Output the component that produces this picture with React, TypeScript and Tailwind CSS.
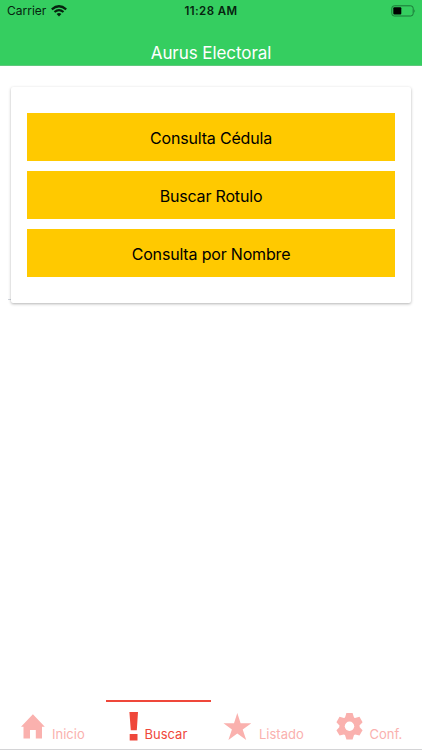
import type { ReactNode } from "react";

const actions = ["Consulta Cédula", "Buscar Rotulo", "Consulta por Nombre"];

const App = () => {
  return (
    <div className="flex h-[750px] w-[422px] flex-col overflow-hidden bg-white font-['Inter',sans-serif]">
      <Header />
      <main className="flex-1 pt-[21px] pr-[11px] pl-2">
        <div className="flex items-end">
          <span className="mb-[3px] h-px w-[3px] flex-none bg-gray-300"></span>
          <section className="flex h-[216px] w-[400px] flex-none flex-col gap-2.5 rounded-[2px] bg-white px-4 pt-[26px] shadow-[0_1px_3px_rgba(0,0,0,0.3)]">
            {actions.map((label) => (
              <button
                key={label}
                className="h-12 w-full bg-[#ffc900] pt-px text-base tracking-[-0.18px] text-black"
              >
                {label}
              </button>
            ))}
          </section>
        </div>
      </main>
      <TabBar />
    </div>
  );
};

const Header = () => {
  return (
    <header className="h-[66px] flex-none border-b border-[#5fc87d] bg-[#35ce60]">
      <div className="grid h-[22px] grid-cols-3 items-center text-[12px] text-[#06240f]">
        <div className="flex items-center gap-[5px] pl-[7px]">
          <span>Carrier</span>
          <WifiIcon />
        </div>
        <span className="pt-px text-center text-[11.5px] font-semibold tracking-[0.4px]">
          11:28 AM
        </span>
        <div className="flex justify-end pr-1.5">
          <BatteryIcon />
        </div>
      </div>
      <h1 className="pt-[19px] text-center text-[17px] leading-6 tracking-[-0.07px] text-white">
        Aurus Electoral
      </h1>
    </header>
  );
};

const TabBar = () => {
  return (
    <nav className="grid h-[50px] flex-none grid-cols-4 border-b border-[#d4d4d6] text-[13px]">
      <Tab label="Inicio" offset="gap-1.5 pl-5">
        <svg width="26" height="30" viewBox="0 0 26 30" fill="currentColor">
          <path d="M1 14.8 12.9 2.2 24.8 14.8H22V26.6H15.8V18H10V26.6H3.5V14.8Z" />
        </svg>
      </Tab>
      <Tab label="Buscar" offset="gap-1.5 pl-[23px]" active>
        <svg width="10" height="30" viewBox="0 0 10 30" fill="currentColor">
          <path d="M.4 0H9L7.8 18.3H1.8ZM.7 22H8.5V28.5H.7Z" />
        </svg>
      </Tab>
      <Tab label="Listado" offset="gap-2 pl-3">
        <svg width="28" height="30" viewBox="0 0 28 30" fill="currentColor">
          <path d="M14.3 1 17.6 11.3H28.2L19.7 17.5 23.2 28 14.3 21.6 5.4 28 8.9 17.5.5 11.3H11Z" />
        </svg>
      </Tab>
      <Tab label="Conf." offset="gap-[7px] pl-[18px]">
        <GearIcon />
      </Tab>
    </nav>
  );
};

type TabProps = {
  label: string;
  offset: string;
  active?: boolean;
  children: ReactNode;
};

const Tab = ({ label, offset, active = false, children }: TabProps) => {
  return (
    <button
      className={`flex items-start border-t-2 pt-2.5 whitespace-nowrap ${offset} ${
        active
          ? "border-[#ef473a] text-[#ef473a]"
          : "border-transparent text-[#fab1ae]"
      }`}
    >
      <span className="flex-none">{children}</span>
      <span className="pt-3 leading-5">{label}</span>
    </button>
  );
};

const GearIcon = () => {
  return (
    <svg width="28" height="30" viewBox="-14.5 -14.2 28 30" fill="currentColor">
      <circle r="9.9" />
      {[0, 60, 120].map((angle) => (
        <path
          key={angle}
          transform={`rotate(${angle})`}
          d="M-3.1-13.3H3.1L4.7-8V8L3.1 13.3H-3.1L-4.7 8V-8Z"
        />
      ))}
      <circle r="4.7" fill="#fff" />
    </svg>
  );
};

const WifiIcon = () => {
  return (
    <svg
      width="16"
      height="12"
      viewBox="0 0 16 12"
      fill="none"
      stroke="#06240f"
      strokeWidth="2.2"
    >
      <path d="M.8 4.3Q8-1.8 15.2 4.3M3.5 7Q8 3.1 12.5 7" />
      <path d="M5.6 8.9Q8 6.9 10.4 8.9L8 11.4Z" fill="#06240f" stroke="none" />
    </svg>
  );
};

const BatteryIcon = () => {
  return (
    <svg width="25" height="12" viewBox="0 0 25 12">
      <rect
        x=".8"
        y=".8"
        width="21.4"
        height="10.2"
        rx="2.5"
        fill="none"
        stroke="#1c7738"
      />
      <rect x="2.3" y="2.3" width="8" height="7.2" rx="1" fill="#000" />
      <path d="M23.3 4.2Q24.8 6 23.3 7.8Z" fill="#1c7738" />
    </svg>
  );
};

export default App;
